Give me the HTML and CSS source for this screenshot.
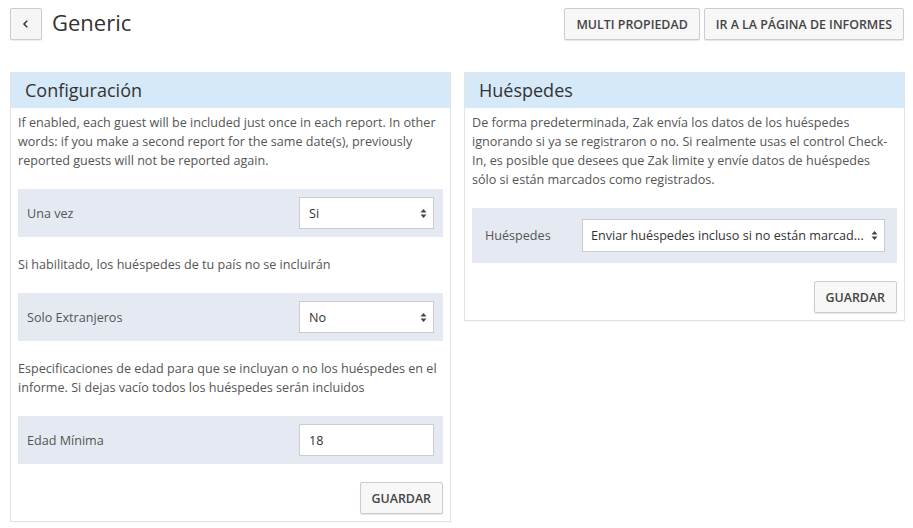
FILE: index.html
```html
<!DOCTYPE html>
<html lang="es">
<head>
  <meta charset="UTF-8">
  <meta name="viewport" content="width=device-width, initial-scale=1.0">
  <title>Generic</title>
  <link rel="stylesheet" href="styles.css">
</head>
<body>
  <div class="page">
    <div class="topbar">
      <div class="title-wrap">
        <button class="back-btn" aria-label="Volver">
          <svg width="10" height="10" viewBox="0 0 10 10"><path d="M6.2 1.8 L3 5 L6.2 8.2" fill="none" stroke="#333" stroke-width="1.5"/></svg>
        </button>
        <h1 class="page-title">Generic</h1>
      </div>
      <div class="top-actions">
        <button class="btn">MULTI PROPIEDAD</button>
        <button class="btn">IR A LA PÁGINA DE INFORMES</button>
      </div>
    </div>

    <div class="panels">
      <div class="panel">
        <div class="panel-head">Configuración</div>
        <div class="panel-body">
          <p class="help">If enabled, each guest will be included just once in each report. In other words: if you make a second report for the same date(s), previously reported guests will not be reported again.</p>
          <div class="form-row">
            <label class="row-label">Una vez</label>
            <div class="select-box small">
              <span>Si</span>
              <svg class="arrows" width="7" height="11" viewBox="0 0 7 11"><path d="M3.5 1 L6.5 4.5 H0.5 Z M3.5 10 L6.5 6.5 H0.5 Z" fill="#444"/></svg>
            </div>
          </div>
          <p class="help">Si habilitado, los huéspedes de tu país no se incluirán</p>
          <div class="form-row">
            <label class="row-label">Solo Extranjeros</label>
            <div class="select-box small">
              <span>No</span>
              <svg class="arrows" width="7" height="11" viewBox="0 0 7 11"><path d="M3.5 1 L6.5 4.5 H0.5 Z M3.5 10 L6.5 6.5 H0.5 Z" fill="#444"/></svg>
            </div>
          </div>
          <p class="help">Especificaciones de edad para que se incluyan o no los huéspedes en el informe. Si dejas vacío todos los huéspedes serán incluidos</p>
          <div class="form-row">
            <label class="row-label">Edad Mínima</label>
            <input class="text-input small" type="text" value="18">
          </div>
          <div class="panel-foot">
            <button class="btn">GUARDAR</button>
          </div>
        </div>
      </div>

      <div class="panel">
        <div class="panel-head">Huéspedes</div>
        <div class="panel-body">
          <p class="help">De forma predeterminada, Zak envía los datos de los huéspedes ignorando si ya se registraron o no. Si realmente usas el control Check-In, es posible que desees que Zak limite y envíe datos de huéspedes sólo si están marcados como registrados.</p>
          <div class="form-row wide">
            <label class="row-label">Huéspedes</label>
            <div class="select-box long">
              <span>Enviar huéspedes incluso si no están marcad...</span>
              <svg class="arrows" width="7" height="11" viewBox="0 0 7 11"><path d="M3.5 1 L6.5 4.5 H0.5 Z M3.5 10 L6.5 6.5 H0.5 Z" fill="#444"/></svg>
            </div>
          </div>
          <div class="panel-foot">
            <button class="btn">GUARDAR</button>
          </div>
        </div>
      </div>
    </div>
  </div>
</body>
</html>
```

FILE: styles.css
```css
body {
  margin: 0;
  font-family: "Open Sans", "Liberation Sans", sans-serif;
  color: #555;
  background: #fff;
}
.page {
  padding: 8px 8px 0 10px;
}
.topbar {
  display: flex;
  justify-content: space-between;
  align-items: flex-start;
  height: 32px;
}
.title-wrap {
  display: flex;
  align-items: center;
  gap: 10px;
}
.back-btn {
  width: 32px;
  height: 32px;
  padding: 0;
  border: 1px solid #ccc;
  border-radius: 2px;
  background: #f6f6f6;
  box-shadow: 0 1px 1px rgba(0,0,0,0.08);
  display: flex;
  align-items: center;
  justify-content: center;
}
.page-title {
  margin: 0;
  font-size: 22px;
  font-weight: 400;
  color: #333;
  line-height: 32px;
  position: relative;
  top: -2px;
}
.top-actions {
  display: flex;
  gap: 4px;
  margin-right: 1px;
}
.btn {
  height: 32px;
  padding: 0 11px;
  border: 1px solid #ccc;
  border-radius: 2px;
  background: #f7f7f7;
  box-shadow: 0 1px 1px rgba(0,0,0,0.1);
  font-family: "Open Sans", "Liberation Sans", sans-serif;
  font-size: 12.4px;
  font-weight: 600;
  color: #444;
}
.panels {
  display: grid;
  grid-template-columns: 441px 441px;
  gap: 13px;
  margin-top: 32px;
  align-items: start;
}
.panel {
  border: 1px solid #e3e3e3;
  box-shadow: 0 1px 1px rgba(0,0,0,0.04);
}
.panel-head {
  background: #d6e9f8;
  height: 35px;
  line-height: 35px;
  padding: 0 14px;
  font-size: 18px;
  color: #333;
}
.panel-body {
  padding: 5px 7px 7px 7px;
}
.help {
  margin: 0 0 19px;
  font-size: 12.6px;
  line-height: 19px;
  color: #555;
}
.form-row {
  display: flex;
  align-items: center;
  justify-content: space-between;
  background: #e5eaf2;
  padding: 8px 9px;
  margin-bottom: 18px;
}
.form-row.wide {
  padding: 11px 12px 11px 13px;
}
.row-label {
  font-size: 12.6px;
  color: #555;
}
.select-box,
.text-input {
  box-sizing: border-box;
  height: 32px;
  border: 1px solid #ccc;
  background: #fff;
  font-family: "Open Sans", "Liberation Sans", sans-serif;
  font-size: 12.6px;
  color: #333;
}
.select-box {
  position: relative;
  display: flex;
  align-items: center;
  padding: 0 9px;
}
.select-box.small,
.text-input.small {
  width: 135px;
}
.select-box.long {
  width: 303px;
  height: 33px;
  padding-left: 8px;
}
.arrows {
  position: absolute;
  right: 6px;
  top: 10px;
}
.text-input {
  padding: 0 9px;
  outline: none;
}
.panel-foot {
  display: flex;
  justify-content: flex-end;
}
```
